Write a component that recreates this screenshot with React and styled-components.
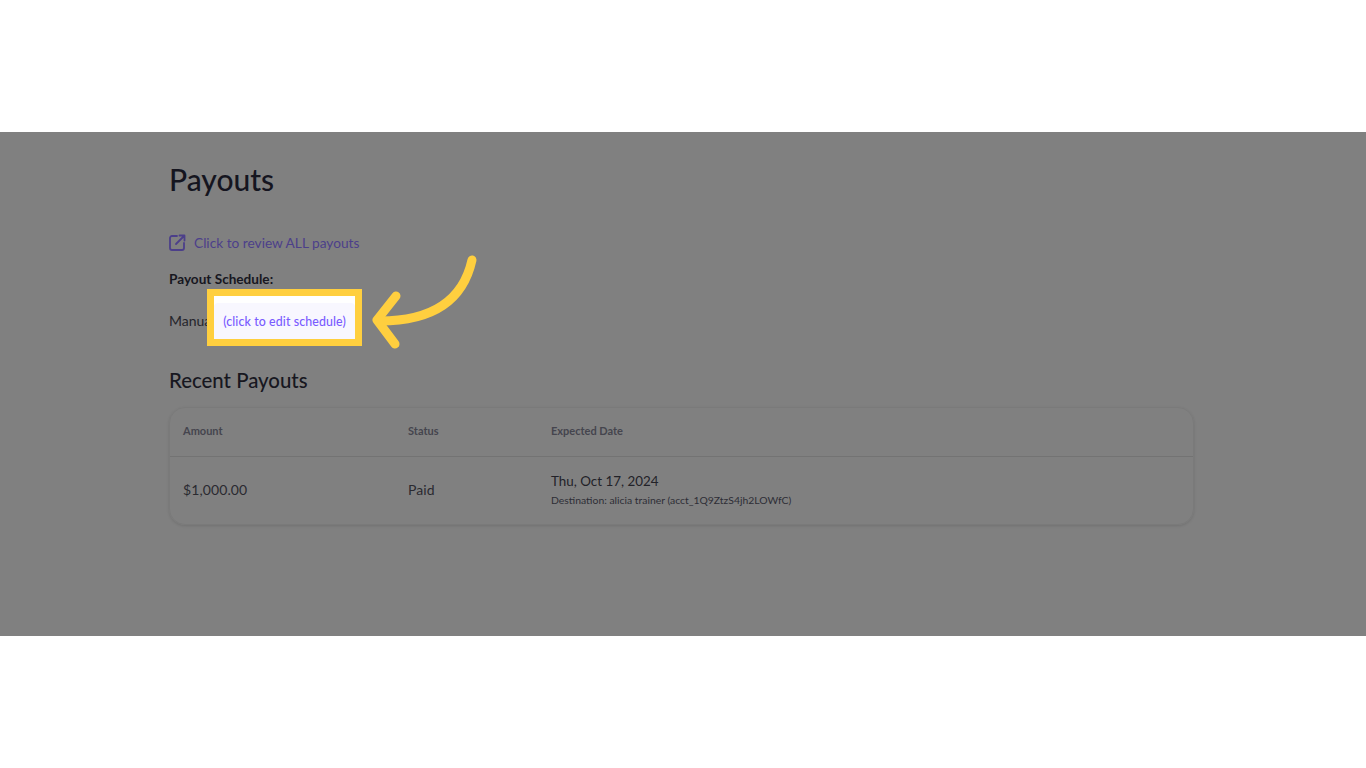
import React from 'react';
import styled, { createGlobalStyle } from 'styled-components';

const GlobalStyle = createGlobalStyle`
  html, body {
    margin: 0;
    background: #fff;
    font-family: Lato, "Noto Sans", sans-serif;
  }
`;

const Page = styled.div`
  height: 768px;
  padding-top: 132px;
  box-sizing: border-box;
  overflow: hidden;
`;

const Stage = styled.main`
  position: relative;
  height: 504px;
  background: #808080;
  padding: 28px 172px 0 169px;
  box-sizing: border-box;
`;

const Title = styled.h1`
  margin: 0;
  font-size: 30px;
  line-height: 38px;
  font-weight: 500;
  color: #15151f;
`;

const ReviewLink = styled.a`
  display: flex;
  align-items: center;
  gap: 8px;
  margin-top: 34px;
  height: 20px;
  font-size: 13.7px;
  color: #4c3f8a;
`;

const Label = styled.div`
  margin-top: 17px;
  font-size: 13.6px;
  line-height: 20px;
  font-weight: 700;
  color: #17171f;
`;

const ScheduleRow = styled.div`
  margin-top: 22px;
  font-size: 14px;
  line-height: 20px;
  color: #25252b;
`;

const SectionTitle = styled.h2`
  margin: 35px 0 0;
  font-size: 20.4px;
  line-height: 28px;
  font-weight: 500;
  color: #17171f;
`;

const Table = styled.section`
  margin-top: 13px;
  border: 1px solid #7a7a7a;
  border-radius: 16px;
  box-shadow: 0 1px 3px rgba(0, 0, 0, 0.12);
`;

const Row = styled.div`
  display: grid;
  grid-template-columns: 225px 143px 1fr;
  align-items: center;
  height: ${p => p.$height}px;
  padding: 0 0 ${p => p.$lift}px 13px;
  box-sizing: border-box;
  border-bottom: ${p => (p.$divider ? '1px solid #737373' : 'none')};
`;

const HeadCell = styled.div`
  font-size: 11px;
  font-weight: 700;
  color: #45454e;
`;

const Cell = styled.div`
  font-size: 14px;
  color: #2a2a30;
  letter-spacing: 0.1px;
`;

const DateLine = styled.div`
  font-size: 13.4px;
  line-height: 18px;
  color: #222228;
`;

const Destination = styled.div`
  margin-top: 3px;
  font-size: 10.4px;
  line-height: 14px;
  color: #2e2e36;
`;

const Highlight = styled.div`
  position: absolute;
  left: 207px;
  top: 157px;
  width: 155px;
  height: 57px;
  box-sizing: border-box;
  border: 7px solid #ffcf3f;
  background: #fff;
  display: flex;
  align-items: stretch;
`;

const Chip = styled.a`
  flex: 1;
  display: flex;
  align-items: center;
  justify-content: center;
  margin-top: 7px;
  background: #f8f7ff;
  border-radius: 4px 4px 0 0;
  font-size: 12.4px;
  font-weight: 500;
  color: #7a5cff;
  letter-spacing: 0.1px;
`;

const Arrow = styled.svg`
  position: absolute;
  left: 366px;
  top: 118px;
`;

export default function App() {
  return (
    <Page>
      <GlobalStyle />
      <Stage>
        <Title>Payouts</Title>
        <ReviewLink>
          <svg width="17" height="17" viewBox="0 0 17 17" fill="none" stroke="currentColor" strokeWidth="1.8" strokeLinecap="round" strokeLinejoin="round">
            <path d="M8 2H3a2 2 0 0 0-2 2v10a2 2 0 0 0 2 2h10a2 2 0 0 0 2-2V9" />
            <path d="M7 10L15.5 1.5M10.5 1.5h5v5" />
          </svg>
          Click to review ALL payouts
        </ReviewLink>
        <Label>Payout Schedule:</Label>
        <ScheduleRow>Manual</ScheduleRow>
        <SectionTitle>Recent Payouts</SectionTitle>
        <Table>
          <Row $height={49} $lift={3} $divider>
            <HeadCell>Amount</HeadCell>
            <HeadCell>Status</HeadCell>
            <HeadCell>Expected Date</HeadCell>
          </Row>
          <Row $height={67} $lift={2}>
            <Cell>$1,000.00</Cell>
            <Cell>Paid</Cell>
            <div>
              <DateLine>Thu, Oct 17, 2024</DateLine>
              <Destination>Destination: alicia trainer (acct_1Q9ZtzS4jh2LOWfC)</Destination>
            </div>
          </Row>
        </Table>
        <Highlight>
          <Chip>(click to edit schedule)</Chip>
        </Highlight>
        <Arrow width="116" height="104" viewBox="0 0 116 104" fill="none">
          <path d="M106 10C98 46 72 71 14 71" stroke="#ffcf3f" strokeWidth="9" strokeLinecap="round" />
          <path d="M30 46L11 70L29 94" stroke="#ffcf3f" strokeWidth="9" strokeLinecap="round" strokeLinejoin="round" />
        </Arrow>
      </Stage>
    </Page>
  );
}
